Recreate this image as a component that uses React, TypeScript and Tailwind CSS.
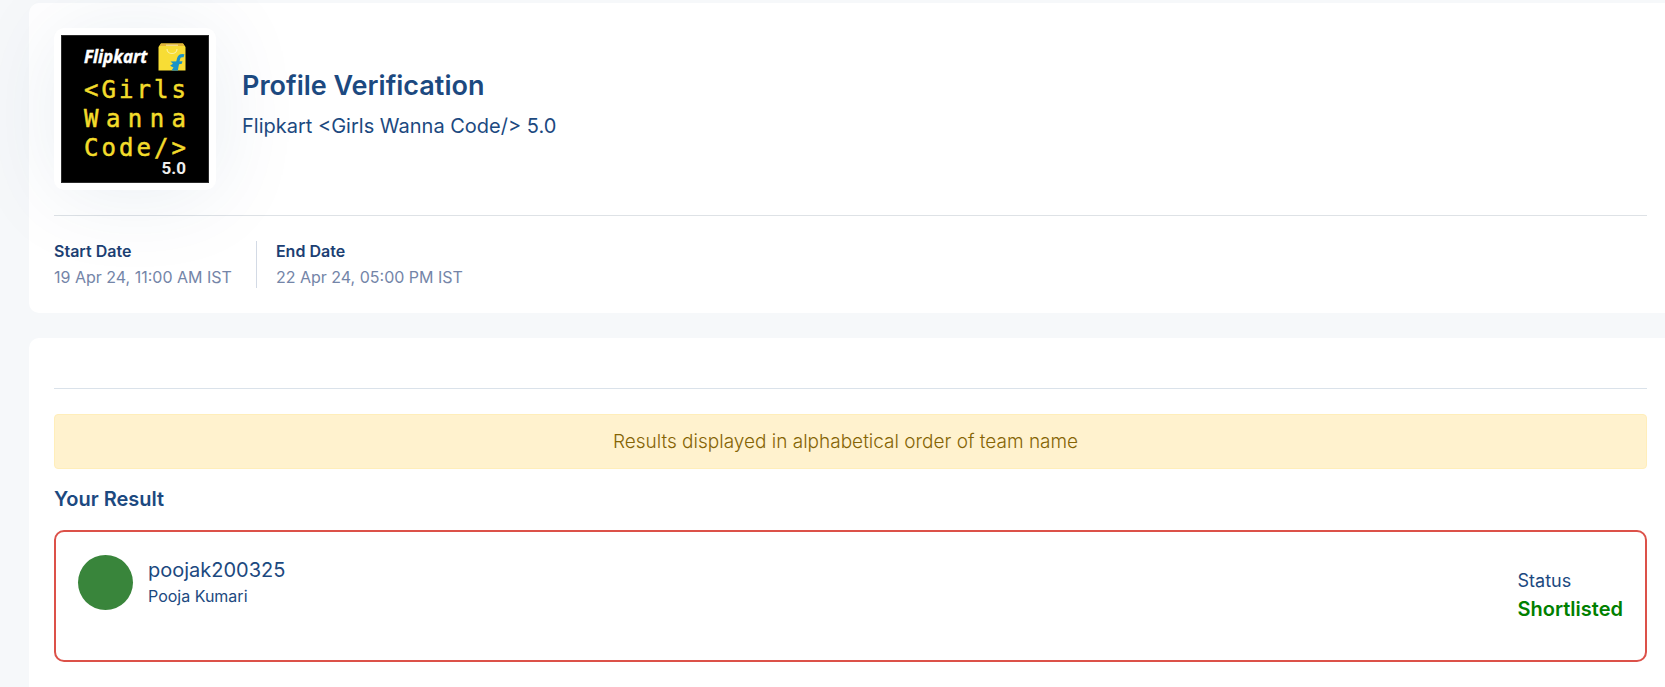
import React from "react";

function SpacedWord({ word }: { word: string }) {
  return (
    <div
      aria-label={word}
      className="flex h-[29px] items-center justify-between font-['DejaVu_Sans_Mono',monospace] text-[24px] leading-6 text-[#f3dc2b] [-webkit-text-stroke:0.5px_#f3dc2b]"
    >
      {word.split("").map((letter, i) => (
        <span key={i}>{letter}</span>
      ))}
    </div>
  );
}

function BagIcon() {
  return (
    <svg viewBox="0 0 28 28" className="size-7" aria-hidden="true">
      <path d="M3 0.5H25L27.500 4V27.500H0.500V4Z" fill="#f8dd35" />
      <path d="M3 0.5H25L26.500 3H1.500Z" fill="#e3b53a" />
      <path d="M8 2.300H20" stroke="#f3d98a" strokeWidth="1.4" />
      <path d="M9 6C9 12 19 12 19 6" fill="none" stroke="#fbf0a0" strokeWidth="1.2" />
      <path d="M26 12.800C21 11.500 20.500 15 19.800 19L18.200 27.500" fill="none" stroke="#1b93c8" strokeWidth="3.200" />
      <path d="M24.500 18.300L23.800 20.800L19.500 21.500L17.500 27.500H13.500L15.500 24.500L12 22.800L15 20.800L12.500 18.500Z" fill="#1b93c8" />
    </svg>
  );
}

function EventLogo() {
  return (
    <div className="shrink-0 rounded-[10px] bg-white p-[7px] shadow-[0_4px_90px_rgba(24,70,123,0.09)]">
      <div className="size-[148px] border border-[#2a2a2a] bg-black px-[22px] pt-[7px]">
        <div className="flex items-center justify-between">
          <span className="font-['Open_Sans',sans-serif] text-[17px] font-bold italic leading-7 text-white [-webkit-text-stroke:0.4px_white]">
            Flipkart
          </span>
          <BagIcon />
        </div>
        <div className="mt-1">
          <SpacedWord word="<Girls" />
          <SpacedWord word="Wanna" />
          <SpacedWord word="Code/>" />
        </div>
        <div className="text-right font-[Roboto,sans-serif] text-[17px] font-bold leading-3 text-[#eeeeee]">5.0</div>
      </div>
    </div>
  );
}

function DateItem({ label, value }: { label: string; value: string }) {
  return (
    <div className="flex flex-col">
      <dt className="pb-1 text-[16px] font-semibold leading-[21px]">{label}</dt>
      <dd className="pt-px text-[16px] leading-[21px] text-[#7485a8]">{value}</dd>
    </div>
  );
}

export default function App() {
  return (
    <main className="min-h-screen bg-[#f6f8fa] pl-[29px] pt-[3px] font-[Inter,sans-serif] text-[#1c4980]">
      <section className="rounded-l-[10px] bg-white py-[25px] pl-[25px] pr-[18px]">
        <header className="flex items-center gap-[26px] border-b border-[#dee2e6] pb-[25px]">
          <EventLogo />
          <div className="-mt-2">
            <h1 className="text-[27px] font-semibold leading-9">Profile Verification</h1>
            <p className="mt-[6px] text-[20px] leading-8">Flipkart &lt;Girls Wanna Code/&gt; 5.0</p>
          </div>
        </header>
        <dl className="mt-[25px] flex text-[#1c3f73]">
          <div className="border-r border-[#d3dae5] pr-6">
            <DateItem label="Start Date" value="19 Apr 24, 11:00 AM IST" />
          </div>
          <div className="pl-[19px]">
            <DateItem label="End Date" value="22 Apr 24, 05:00 PM IST" />
          </div>
        </dl>
      </section>

      <section className="mt-[25px] min-h-[349px] rounded-tl-[10px] bg-white pb-[25px] pl-[25px] pr-[18px] pt-[50px]">
        <hr className="border-[#dae2ea]" />
        <p
          role="status"
          className="mt-[25px] rounded border border-[#ffeeba] bg-[#fff2ce] py-3 pl-5 pr-[30px] text-center text-[19px] font-light leading-[29px] text-[#856404]"
        >
          Results displayed in alphabetical order of team name
        </p>
        <h2 className="mt-4 text-[20px] font-semibold leading-7">Your Result</h2>
        <article className="mt-[17px] flex min-h-[132px] justify-between rounded-[10px] border-2 border-[#dc5149] px-[22px] pt-[23px]">
          <div className="flex gap-[15px]">
            <div className="size-[55px] rounded-full bg-[#39853b]" />
            <div>
              <h3 className="text-[20px] leading-[30px]">poojak200325</h3>
              <p className="text-[16px] leading-[22px]">Pooja Kumari</p>
            </div>
          </div>
          <div className="pt-3">
            <p className="text-[18px] leading-7">Status</p>
            <p className="text-[20px] font-semibold leading-7 text-[#008000]">Shortlisted</p>
          </div>
        </article>
      </section>
    </main>
  );
}
